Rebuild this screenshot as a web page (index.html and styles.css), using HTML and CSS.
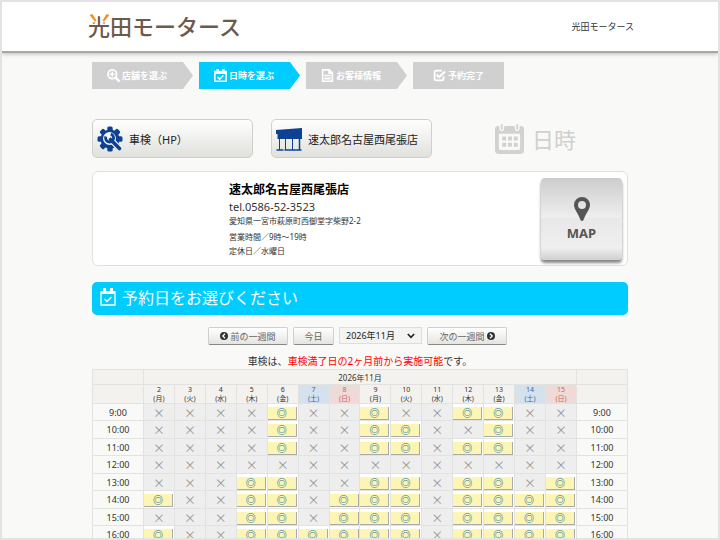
FILE: index.html
```html
<!DOCTYPE html>
<html lang="ja">
<head>
<meta charset="utf-8">
<meta name="viewport" content="width=device-width, initial-scale=1">
<title>光田モータース</title>
<link rel="stylesheet" href="styles.css">
</head>
<body>
<svg class="defs" aria-hidden="true">
  <symbol id="cal-check" viewBox="0 0 16 16">
    <path fill="none" stroke="currentColor" stroke-width="2" d="M1 3h14v12H1z"/>
    <path fill="currentColor" d="M1 3h14v3H1zM3 0h3v5H3zM10 0h3v5h-3z"/>
    <path fill="none" stroke="currentColor" stroke-width="2" d="M4.500 10l2.500 2.500L11.500 8"/>
  </symbol>
  <symbol id="cal-check-line" viewBox="0 0 16 18">
    <path fill="none" stroke="currentColor" stroke-width="1.300" d="M1 4h14v13H1z"/>
    <path fill="currentColor" d="M1 3h14v3H1zM3 0h3v5H3zM10 0h3v5h-3z"/>
    <path fill="none" stroke="currentColor" stroke-width="1.500" d="M4.500 11l2.500 2.500L11.500 9"/>
  </symbol>
</svg>
<div class="page">
  <header class="header">
    <div class="header-inner">
      <a class="logo" href="#">光田モータース
        <svg class="logo-rays" viewBox="0 0 21 9" aria-hidden="true">
          <path fill="#fff" d="M0 0h8v8.500H4L0 5zM13 0h8v5l-4 3.500h-4z"/>
          <path fill="#f7931e" d="M.5 1L3.500 0 7.500 6.500 6 7.800zM20.500 1L17.500 0 13.500 6.500l1.500 1.300z"/>
        </svg>
      </a>
      <span class="shop-name">光田モータース</span>
    </div>
  </header>

  <main class="main">
    <ol class="steps">
      <li class="step">
        <svg class="step-icon" viewBox="0 0 16 16" aria-hidden="true"><circle cx="6.500" cy="6.500" r="5.300" fill="none" stroke="currentColor" stroke-width="2.200"/><path stroke="currentColor" stroke-width="1.800" d="M3.500 6.500h6M6.500 3.500v6"/><path stroke="currentColor" stroke-width="3" stroke-linecap="round" d="M11 11l3.500 3.500"/></svg>
        店舗を選ぶ
      </li>
      <li class="step step-current"><svg class="step-icon" aria-hidden="true"><use href="#cal-check"/></svg>日時を選ぶ</li>
      <li class="step">
        <svg class="step-icon" viewBox="0 0 16 16" aria-hidden="true"><path fill="none" stroke="currentColor" stroke-width="2" d="M2 1h8l4 4v10H2z"/><path fill="currentColor" d="M9 1v5h5zM4 7h8v2H4zM4 10.500h8V13H4z"/></svg>
        お客様情報
      </li>
      <li class="step step-last">
        <svg class="step-icon" viewBox="0 0 16 16" aria-hidden="true"><path fill="none" stroke="currentColor" stroke-width="2.200" d="M13 9v3q0 2-2 2H4q-2 0-2-2V4q0-2 2-2h7"/><path fill="none" stroke="currentColor" stroke-width="2.600" d="M4.500 7l3 3L15 3"/></svg>
        予約完了
      </li>
    </ol>

    <div class="choices">
      <button class="choice" type="button">
        <svg class="choice-icon" viewBox="0 0 26 26" aria-hidden="true">
          <g fill="#0d4194">
            <circle cx="13" cy="13" r="9.500"/>
            <g id="teeth"><rect x="10.300" y="0.500" width="5.400" height="25" rx="1.500"/><rect x="0.500" y="10.300" width="25" height="5.400" rx="1.500"/></g>
            <use href="#teeth" transform="rotate(45 13 13)"/>
          </g>
          <circle cx="12.500" cy="12.500" r="6.500" fill="#f4f4f2"/>
          <path d="M14 14L22 22" stroke="#f4f4f2" stroke-width="6"/>
          <path d="M13.500 13.500L22.500 22.500" stroke="#0d4194" stroke-width="3.600" stroke-linecap="round"/>
          <path d="M8.800 10.600a4 4 0 1 0 5-2.400" fill="none" stroke="#0d4194" stroke-width="2.800"/>
        </svg>
        車検（HP）
      </button>
      <button class="choice" type="button">
        <svg class="choice-icon" viewBox="0 0 26 26" aria-hidden="true">
          <path fill="#0d4194" d="M0 4l26-2v11H1.500V8H0z"/>
          <path fill="none" stroke="#0d4194" d="M3.500 12v12M9.500 12v12M16.500 12v12"/>
          <path fill="none" stroke="#0d4194" stroke-width="1.500" d="M23.500 12v12M.5 24h7M8.500 24h17"/>
        </svg>
        速太郎名古屋西尾張店
      </button>
      <div class="choice-empty">
        <svg class="choice-empty-icon" viewBox="0 0 30 31" aria-hidden="true">
          <path fill="#d2d2d2" fill-rule="evenodd" d="M3 2h24q3 0 3 3v22q0 4-4 4H4q-4 0-4-4V5q0-3 3-3zM4 10v15q0 2 2 2h18q2 0 2-2V10z"/>
          <path stroke="#f9f9f7" stroke-width="5" stroke-linecap="round" d="M7 1v4M23 1v4"/>
          <path stroke="#d2d2d2" stroke-width="2" stroke-linecap="round" d="M7 1v4M23 1v4"/>
          <path stroke="#d2d2d2" stroke-width="4" stroke-dasharray="4 2" d="M7.500 15h16M7.500 21.500h16"/>
        </svg>
        日時
      </div>
    </div>

    <section class="shop">
      <div class="shop-info">
        <h1 class="shop-title">速太郎名古屋西尾張店</h1>
        <p class="shop-tel">tel.0586-52-3523</p>
        <p class="shop-address">愛知県一宮市萩原町西御堂字柴野2-2</p>
        <p class="shop-hours">営業時間／9時～19時<br>定休日／水曜日</p>
      </div>
      <button class="map" type="button">
        <svg class="map-pin" viewBox="0 0 16 24" aria-hidden="true"><path fill="#555" fill-rule="evenodd" d="M8 0a8 8 0 0 1 8 8c0 4-4 8-6.500 15q-1.500 2-3 0C4 16 0 12 0 8a8 8 0 0 1 8-8zm0 4a4 4 0 1 0 0 8 4 4 0 0 0 0-8z"/></svg>
        MAP
      </button>
    </section>

    <h2 class="banner"><svg class="banner-icon" aria-hidden="true"><use href="#cal-check-line"/></svg>予約日をお選びください</h2>

    <div class="toolbar">
      <button class="tool tool-week" type="button">
        <svg class="tool-icon" viewBox="0 0 8 8" aria-hidden="true"><circle cx="4" cy="4" r="4" fill="#333"/><path fill="none" stroke="#fff" stroke-width="1.300" d="M5 1.800L2.800 4 5 6.200"/></svg>前の一週間
      </button>
      <button class="tool" type="button">今日</button>
      <div class="month">
        <select class="month-select" aria-label="年月"><option>2026年11月</option></select>
        <svg class="month-arrow" viewBox="0 0 8 6" aria-hidden="true"><path fill="none" stroke="#222" stroke-width="1.600" d="M.8 1L4 4.400 7.200 1"/></svg>
      </div>
      <button class="tool tool-week" type="button">次の一週間<svg class="tool-icon" viewBox="0 0 8 8" aria-hidden="true"><circle cx="4" cy="4" r="4" fill="#333"/><path fill="none" stroke="#fff" stroke-width="1.300" d="M3 1.800L5.200 4 3 6.200"/></svg></button>
    </div>

    <p class="notice">車検は、<strong class="notice-key">車検満了日の2ヶ月前から実施可能</strong>です。</p>

    <table class="calendar">
      <colgroup><col class="col-time"><col span="14"><col class="col-time"></colgroup>
      <thead>
        <tr class="row-month"><th></th><th colspan="14">2026年11月</th><th></th></tr>
        <tr class="row-days" id="days"></tr>
      </thead>
      <tbody id="slots"></tbody>
    </table>
  </main>
</div>
<script src="script.js"></script>
</body>
</html>
```
FILE: styles.css
```css
* {
  box-sizing: border-box;
}

body {
  margin: 0;
  color: #333;
  background: #f9f9f7;
  font-family: "Noto Sans", "Noto Sans CJK JP", sans-serif;
}

button,
select {
  font-family: inherit;
  color: inherit;
  padding: 0;
  margin: 0;
}

h1,
h2,
p,
ol {
  margin: 0;
  padding: 0;
}

.defs {
  position: absolute;
  width: 0;
  height: 0;
}

.page {
  height: 100vh;
  overflow: hidden;
  border: 2px solid #e3e3e3;
}

.header {
  background: #fff;
  border-bottom: 2px solid #a8a8a8;
  box-shadow: 0 1px 4px rgba(0, 0, 0, 0.25);
}

.header-inner {
  display: flex;
  align-items: center;
  justify-content: space-between;
  max-width: 548px;
  height: 49px;
  margin: 0 auto;
  padding-left: 2px;
}

.logo {
  position: relative;
  padding-bottom: 4px;
  color: #6c5a4b;
  font-family: "Noto Sans CJK JP", sans-serif;
  font-size: 22px;
  font-weight: 500;
  line-height: 24px;
  text-decoration: none;
}

.logo-rays {
  position: absolute;
  left: 1px;
  top: 1px;
  width: 21px;
  height: 9px;
}

.shop-name {
  font-size: 9px;
  line-height: 12px;
}

.main {
  max-width: 536px;
  margin: 0 auto;
  padding-top: 9px;
}

.steps {
  display: grid;
  grid-template-columns: 101px 101px 101px 91px;
  gap: 6px;
  list-style: none;
}

.step {
  display: flex;
  align-items: center;
  justify-content: center;
  gap: 2px;
  height: 27px;
  padding-right: 11px;
  color: #fff;
  background: #d0d0d0;
  font-size: 9px;
  font-weight: 700;
  clip-path: polygon(0 0, 91px 0, 100% 50%, 91px 100%, 0 100%);
}

.step-current {
  background: #0cf;
}

.step-last {
  padding-right: 0;
  clip-path: none;
}

.step-icon {
  width: 13px;
  height: 13px;
}

.choices {
  display: grid;
  grid-template-columns: 161px 161px 1fr;
  gap: 18px;
  margin-top: 30px;
}

.choice {
  display: flex;
  align-items: center;
  gap: 6px;
  height: 39px;
  padding: 0 4px;
  border: 1px solid #cfcfcb;
  border-radius: 5px;
  background: linear-gradient(#fff, #e0e1dc);
  color: #222;
  font-size: 11px;
}

.choice-icon {
  width: 26px;
  height: 26px;
}

.choice-empty {
  display: flex;
  align-items: center;
  gap: 8px;
  padding-left: 45px;
  color: #d0d0d0;
  font-size: 22px;
  line-height: 24px;
}

.choice-empty-icon {
  width: 29px;
  height: 30px;
}

.shop {
  display: flex;
  justify-content: space-between;
  align-items: flex-start;
  margin-top: 13px;
  padding: 6px 5px 1px 136px;
  background: #fff;
  border: 1px solid #e0e0dc;
  border-radius: 6px;
}

.shop-title {
  margin-top: 3px;
  color: #000;
  font-size: 12px;
  font-weight: 700;
  line-height: 18px;
}

.shop-tel {
  font-size: 11px;
  line-height: 16px;
}

.shop-address {
  font-size: 8px;
  line-height: 12px;
}

.shop-hours {
  margin-top: 3px;
  font-size: 8px;
  line-height: 14px;
}

.map {
  display: flex;
  flex-direction: column;
  align-items: center;
  justify-content: center;
  gap: 3px;
  width: 81px;
  height: 82px;
  margin-bottom: 4px;
  border: 0;
  border-radius: 4px;
  background: linear-gradient(#cdcdcd, #eee 48%, #e8e8e8 49%, #efefef 85%, #d0d0d0);
  box-shadow: 0 3px 3px #888;
  color: #555;
  font-size: 13px;
  font-weight: 700;
  line-height: 18px;
}

.map-pin {
  width: 16px;
  height: 24px;
}

.banner {
  display: flex;
  align-items: center;
  gap: 6px;
  height: 33px;
  margin-top: 16px;
  padding: 0 8px 4px;
  border-radius: 5px;
  background: #0cf;
  color: #fff;
  font-size: 16px;
  font-weight: 400;
}

.banner-icon {
  width: 16px;
  height: 18px;
}

.toolbar {
  display: flex;
  justify-content: center;
  gap: 5px;
  margin-top: 12px;
  padding-right: 5px;
}

.tool {
  display: flex;
  align-items: center;
  justify-content: center;
  gap: 2px;
  width: 41px;
  height: 18px;
  border: 1px solid #d0d0cc;
  border-bottom-color: #888;
  border-radius: 2px;
  background: linear-gradient(#fff, #e4e4e0);
  color: #666;
  font-size: 9px;
}

.tool-week {
  width: 80px;
}

.tool-icon {
  width: 8px;
  height: 8px;
}

.month {
  position: relative;
}

.month-select {
  display: block;
  width: 83px;
  height: 17px;
  padding-left: 6px;
  appearance: none;
  border: 1px solid #ddd;
  border-radius: 0;
  background: #f4f4f2;
  color: #222;
  font-size: 9px;
}

.month-arrow {
  position: absolute;
  right: 7px;
  top: 6px;
  width: 8px;
  height: 6px;
  pointer-events: none;
}

.notice {
  margin-top: 8px;
  font-size: 10px;
  line-height: 16px;
  text-align: center;
}

.notice-key {
  color: #f00;
  font-weight: 400;
}

.calendar {
  width: 100%;
  table-layout: fixed;
  border-collapse: separate;
  border-spacing: 0;
  border-top: 1px solid #e2e2e0;
  border-left: 1px solid #e2e2e0;
  font-size: 9px;
  line-height: 9px;
  text-align: center;
}

.col-time {
  width: 51px;
}

.calendar th,
.calendar td {
  padding: 0;
  border-right: 1px solid #e2e2e0;
  border-bottom: 1px solid #e2e2e0;
  font-weight: 400;
}

.calendar thead th {
  background: #f4f2ee;
}

.calendar .row-month {
  height: 15px;
  font-size: 8px;
}

.calendar .row-days {
  font-size: 7px;
  line-height: 9px;
}

.day,
.weekday {
  display: block;
}

.calendar .sat {
  background: #d5e2ee;
  color: #36699f;
}

.calendar .sun {
  background: #eedad7;
  color: #c66;
}

.slot-row {
  height: 17px;
}

.slot-row:nth-child(even) {
  height: 18px;
}

.calendar td {
  background: #eee;
  color: #999;
  font-family: "Noto Sans CJK JP", sans-serif;
  font-size: 12px;
}

.calendar td.open {
  background: #fff;
}

.slot {
  display: block;
  width: 29px;
  height: 13px;
  margin-top: 2px;
  border: 0;
  border-right: 1px solid #aaa;
  border-bottom: 1px solid #aaa;
  background: #fdf5b4;
  color: #1f78a8;
  font-family: "Noto Sans CJK JP", sans-serif;
  font-size: 10px;
  font-weight: 900;
  line-height: 12px;
}
```
FILE: script.js
```js
const weekdays = ["日", "月", "火", "水", "木", "金", "土"];
const firstDay = 2;
const dayCount = 14;
const openDays = {
  "9:00": [6, 9, 12, 13],
  "10:00": [6, 9, 10, 13],
  "11:00": [6, 9, 10, 12, 13],
  "12:00": [],
  "13:00": [5, 6, 9, 10, 12, 13, 15],
  "14:00": [2, 5, 6, 8, 9, 10, 12, 13, 14, 15],
  "15:00": [5, 6, 8, 9, 10, 12, 13, 14, 15],
  "16:00": [2, 5, 6, 7, 8, 9, 10, 12, 13, 14, 15]
};

const days = Array.from({ length: dayCount }, (_, i) => firstDay + i);

// 1 November 2026 is a Sunday.
const weekdayOf = (day) => (day - 1) % 7;

document.getElementById("days").innerHTML =
  "<th></th>" +
  days.map((day) => {
    const w = weekdayOf(day);
    const cls = w === 6 ? ' class="sat"' : w === 0 ? ' class="sun"' : "";
    return `<th${cls}><span class="day">${day}</span><span class="weekday">(${weekdays[w]})</span></th>`;
  }).join("") +
  "<th></th>";

document.getElementById("slots").innerHTML = Object.entries(openDays)
  .map(([time, open]) => {
    const cells = days.map((day) =>
      open.includes(day)
        ? '<td class="open"><button class="slot" type="button">◎</button></td>'
        : "<td>×</td>"
    ).join("");
    return `<tr class="slot-row"><th>${time}</th>${cells}<th>${time}</th></tr>`;
  })
  .join("");
```
